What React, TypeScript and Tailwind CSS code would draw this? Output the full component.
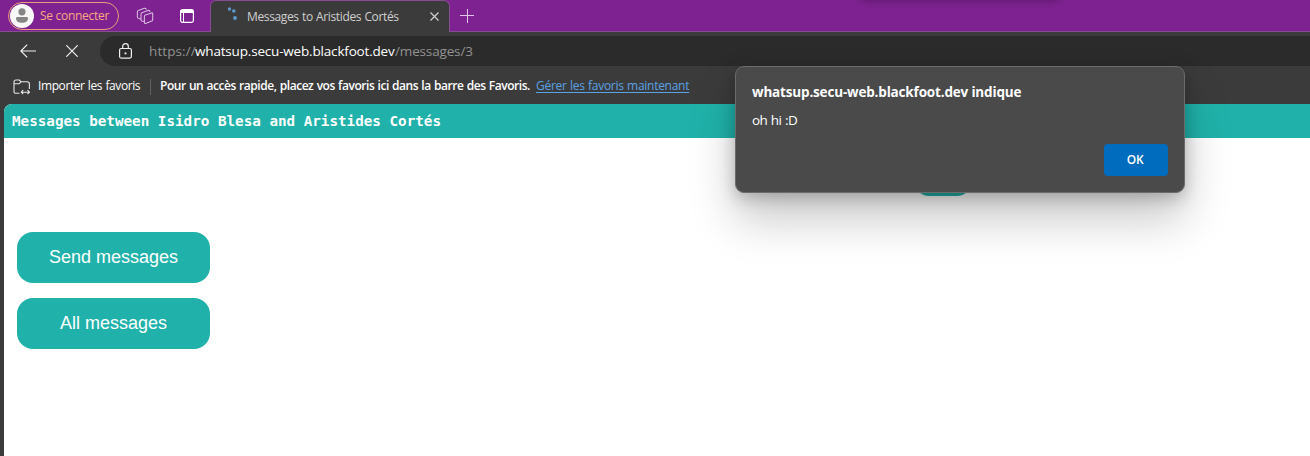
import type { ReactNode } from "react";

function ProfileButton() {
  return (
    <div className="ml-2 mt-0.5 flex h-[28px] w-[111px] shrink-0 items-center rounded-full border border-[#e8a07c] pl-px">
      <svg width="24" height="24" viewBox="0 0 24 24" className="shrink-0">
        <circle cx="12" cy="12" r="12" fill="#f7f7f7" />
        <circle cx="12" cy="7.8" r="3.600" fill="#858585" />
        <path d="M6 14.200q0-1.200 1.200-1.200h9.600q1.200 0 1.200 1.200c0 3-2.500 4.600-6 4.600s-6-1.600-6-4.600z" fill="#858585" />
      </svg>
      <span className="ml-[6px] whitespace-nowrap text-[12px] tracking-[-0.29px] text-[#fba981]">Se connecter</span>
    </div>
  );
}

function WorkspacesIcon() {
  return (
    <svg width="18" height="18" viewBox="0 0 18 18" fill="none" stroke="#d6b8dc" strokeWidth="1.1" strokeLinejoin="round" strokeLinecap="round" className="ml-[17px] mt-[7px] shrink-0">
      <path d="M8.400 9.400q0-1 .9-1.300l6.300-2.200q1.100-.3 1.100.7v6.300q0 .9-.9 1.200l-6.200 2.300q-1.200.300-1.200-.8z" />
      <path d="M8 14.500 6 14q-1-.3-1-1.300V7.200q0-1 .9-1.400l6-2.300q.7-.2 1.300.1l.700.800" />
      <path d="M4.600 12 2.200 11.300q-.8-.3-.8-1.200V4.800q0-1 .9-1.300l6-2.200q.8-.2 1.300.2l.600.700" />
    </svg>
  );
}

function TabActionsIcon() {
  return (
    <svg width="14" height="14" viewBox="0 0 14 14" fill="none" stroke="#fff" className="ml-[26px] mt-[9px] shrink-0">
      <rect x="0.600" y="0.600" width="12.800" height="12.800" rx="1.800" strokeWidth="1.200" />
      <path d="M0.600 2.500h12.800" strokeWidth="3" />
      <path d="M3.500 3v10" strokeWidth="1" />
    </svg>
  );
}

function TabStrip() {
  return (
    <header className="flex h-8 border-b border-[#874d91] bg-[#7d2290]">
      <ProfileButton />
      <WorkspacesIcon />
      <TabActionsIcon />
      <div className="ml-[16px] flex h-8 w-[240px] shrink-0 items-center rounded-t-[6px] border-x border-t border-[#874d91] bg-[#3b3b3b] pl-[16px]">
        <svg width="12" height="16" viewBox="0 0 12 16" fill="#5b9bd0" className="-mt-1 shrink-0">
          <circle cx="2.500" cy="2" r="1.700" />
          <circle cx="6.800" cy="4" r="1.800" />
          <circle cx="8" cy="11" r="1.900" />
        </svg>
        <span className="ml-[8px] w-[183px] whitespace-nowrap text-[12px] tracking-[-0.36px] text-[#d0d0d0] [word-spacing:0.5px]">Messages to Aristides Cortés</span>
        <svg width="9" height="9" viewBox="0 0 9 9" stroke="#d0d0d0" strokeWidth="1.200" className="shrink-0">
          <path d="M.5.500l8 8M8.500.500l-8 8" />
        </svg>
      </div>
      <svg width="14" height="14" viewBox="0 0 14 14" stroke="#e0c6e5" strokeWidth="1" className="ml-[10px] mt-[9px] shrink-0">
        <path d="M0 6.500h14M7.500 0v14" />
      </svg>
    </header>
  );
}

function AddressBar() {
  return (
    <div className="flex h-[38px] items-center">
      <svg width="16" height="14" viewBox="0 0 16 14" fill="none" stroke="#f0f0f0" strokeWidth="1.200" className="ml-[20px] shrink-0">
        <path d="M16 7H1M7.200.700.900 7l6.300 6.300" />
      </svg>
      <svg width="12" height="12" viewBox="0 0 12 12" stroke="#f0f0f0" strokeWidth="1.200" className="ml-[30px] shrink-0">
        <path d="M.3.300l11.400 11.400M11.700.300.300 11.700" />
      </svg>
      <div className="ml-[22px] flex h-[30px] flex-1 items-center rounded-l-full bg-[#2b2b2b]">
        <svg width="13" height="16" viewBox="0 0 13 16" fill="none" stroke="#f0f0f0" strokeWidth="1.200" className="-mt-px ml-[19px] mr-px shrink-0">
          <rect x=".6" y="5.500" width="11.800" height="9.600" rx="1.500" />
          <path d="M3.700 5.500V3.300q0-2.600 2.800-2.600t2.800 2.600v2.200" />
          <rect x="5.900" y="9.800" width="1.200" height="1.200" fill="#f0f0f0" strokeWidth=".6" />
        </svg>
        <div className="ml-[16px] flex whitespace-nowrap text-[13.5px] text-[#929292]">
          <span className="w-[46px] tracking-[0.1px]">https://</span>
          <span className="w-[200px] tracking-[-0.18px] text-white">whatsup.secu-web.blackfoot.dev</span>
          <span className="tracking-[-0.15px]">/messages/3</span>
        </div>
      </div>
    </div>
  );
}

function FavoritesBar() {
  return (
    <div className="flex h-[34px] items-center whitespace-nowrap text-[12px] text-white">
      <svg width="18" height="16" viewBox="0 0 18 16" fill="none" stroke="#e8e8e8" strokeWidth="1.100" strokeLinejoin="round" className="ml-[13px] shrink-0">
        <path d="M6.500 14.300H3.200Q1 14.300 1 12.200V3q0-2 2-2h3.200l2 1.800h5.800q2.400 0 2.400 2.200v5M1 4.700h5.200L8.200 2.800" />
        <path d="M8.200 13.200h8.300M10.200 11.200l-2 2 2 2M14.500 11.200l2 2-2 2" />
      </svg>
      <span className="ml-[7px] w-[112px] pb-[2px] tracking-[-0.41px] [word-spacing:0.6px]">Importer les favoris</span>
      <span className="h-4 w-px bg-[#606060]" />
      <span className="ml-[9px] w-[376px] pb-[2px] font-semibold tracking-[-0.46px] [word-spacing:0.6px]">Pour un accès rapide, placez vos favoris ici dans la barre des Favoris.</span>
      <a href="#" className="pb-[2px] tracking-[-0.27px] text-[#5aa2e6] underline underline-offset-2 [word-spacing:0.5px]">Gérer les favoris maintenant</a>
    </div>
  );
}

function PageButton({ children }: { children: ReactNode }) {
  return (
    <button className="h-[51px] w-[193px] rounded-[16px] bg-[#20b2aa] font-['Liberation_Sans',sans-serif] text-[18px] text-white">{children}</button>
  );
}

function MessagesPage() {
  return (
    <main className="relative ml-1 h-[352px] overflow-hidden rounded-tl-[8px] bg-white">
      <h1 className="h-[34px] whitespace-nowrap bg-[#20b2aa] pl-[8px] font-['DejaVu_Sans_Mono',monospace] text-[14.250px] font-bold leading-[34px] text-white">
        Messages between Isidro Blesa and Aristides Cortés
      </h1>
      <div className="ml-[911px] mt-[24px] h-[34px] w-[56px] rounded-[14px] bg-[#20b2aa]" />
      <div className="ml-[13px] mt-[36px] flex flex-col gap-[15px]">
        <PageButton>Send messages</PageButton>
        <PageButton>All messages</PageButton>
      </div>
    </main>
  );
}

function AlertDialog() {
  return (
    <div role="alertdialog" className="absolute left-[735px] top-[66px] flex h-[127px] w-[450px] flex-col rounded-[9px] border border-[#6b6b6b] bg-[#4a4a4a] px-4 text-white shadow-[0_26px_46px_rgba(0,0,0,0.22),0_5px_16px_rgba(0,0,0,0.22)]">
      <h2 className="mt-[15px] whitespace-nowrap text-[13.5px] font-bold leading-5 tracking-[-0.17px]">whatsup.secu-web.blackfoot.dev indique</h2>
      <p className="mt-2 text-[13.5px] leading-5 tracking-[-0.5px] [word-spacing:0.4px]">oh hi :D</p>
      <button className="mt-[14px] h-8 w-16 self-end rounded-[4px] bg-[#006cbe] pr-[2px] text-[12px] font-semibold tracking-[-0.2px]">OK</button>
    </div>
  );
}

export default function App() {
  return (
    <div className="relative h-[456px] w-[1310px] overflow-hidden bg-[#3b3b3b] font-['Open_Sans',sans-serif]">
      <TabStrip />
      <AddressBar />
      <FavoritesBar />
      <MessagesPage />
      <AlertDialog />
      <div className="absolute left-[862px] -top-[10px] h-2 w-[196px] shadow-[0_2px_8px_rgba(0,0,0,0.3)]" />
    </div>
  );
}
